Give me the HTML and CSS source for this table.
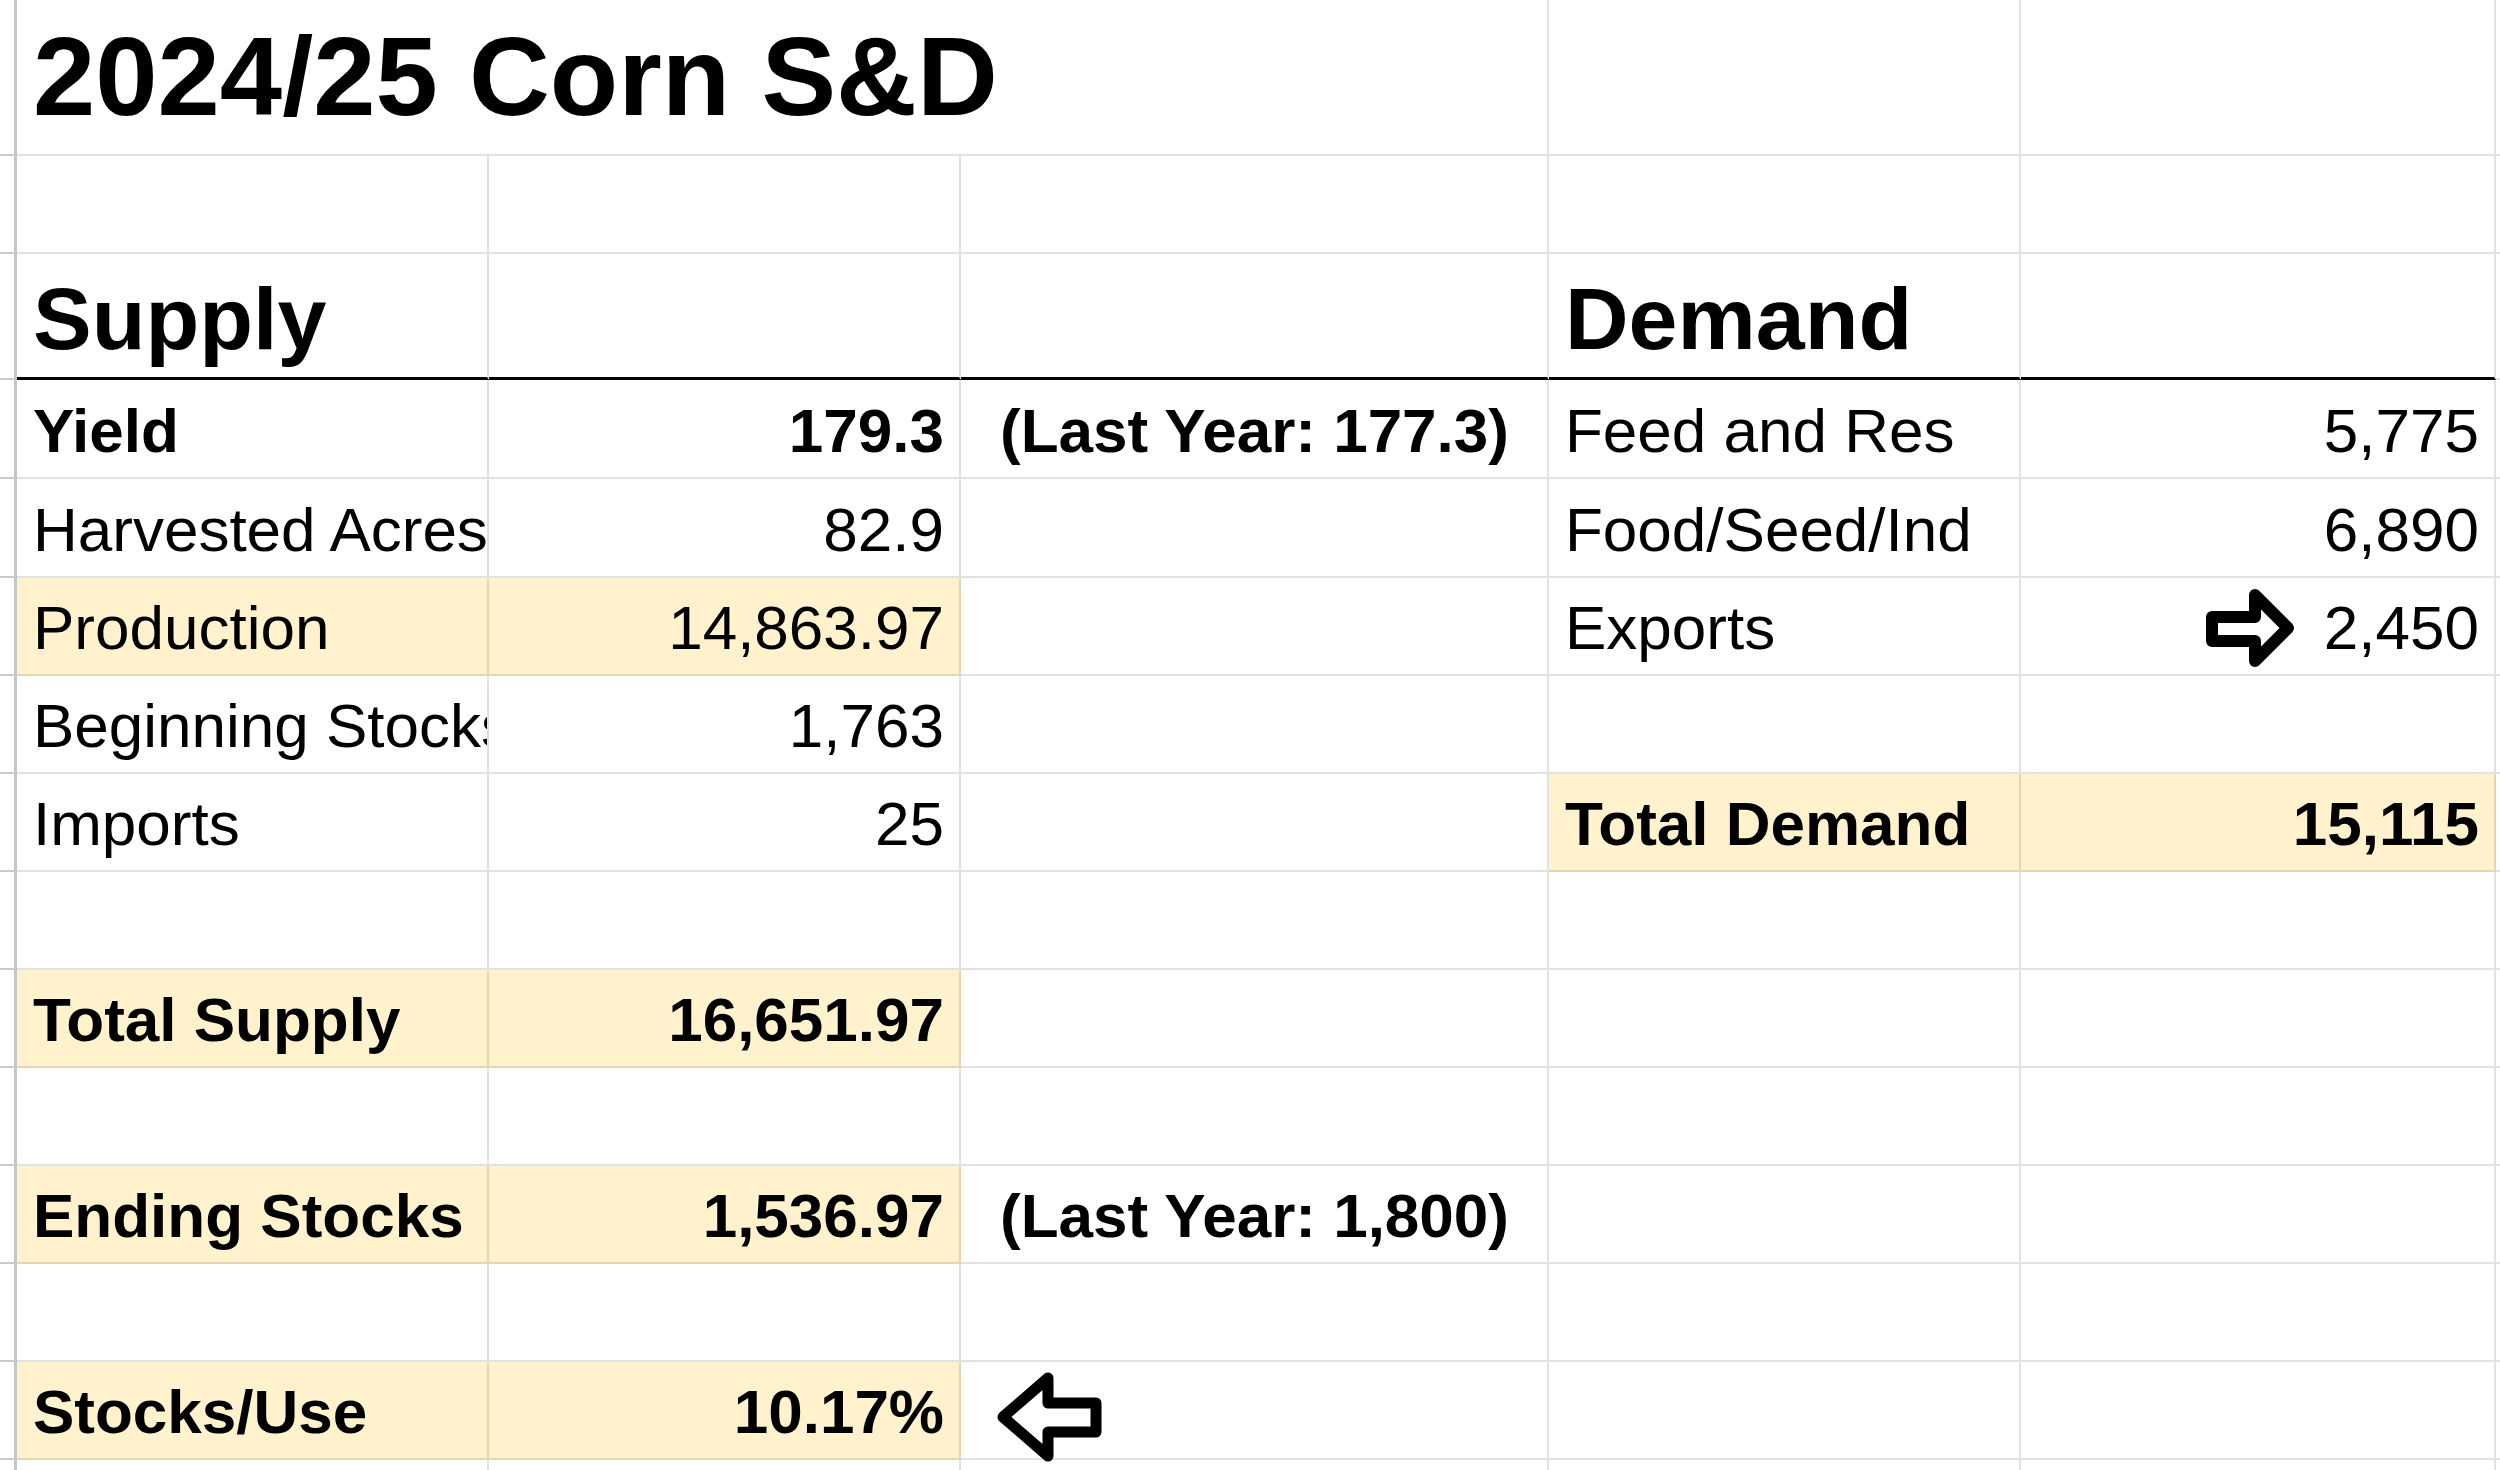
FILE: index.html
```html
<!DOCTYPE html>
<html lang="en">
<head>
<meta charset="utf-8">
<title>2024/25 Corn S&amp;D</title>
<link rel="stylesheet" href="styles.css">
</head>
<body>
<div class="sheet">
  <!-- row 1: title -->
  <div class="stub"></div>
  <div class="cell title span3">2024/25 Corn S&amp;D</div>
  <div class="cell"></div>
  <div class="cell"></div>
  <div class="tail"></div>

  <!-- row 2 -->
  <div class="stub"></div>
  <div class="cell"></div>
  <div class="cell"></div>
  <div class="cell"></div>
  <div class="cell"></div>
  <div class="cell"></div>
  <div class="tail"></div>

  <!-- row 3: section headers -->
  <div class="stub"></div>
  <div class="cell head">Supply</div>
  <div class="cell head"></div>
  <div class="cell head"></div>
  <div class="cell head">Demand</div>
  <div class="cell head"></div>
  <div class="tail"></div>

  <!-- row 4 -->
  <div class="stub"></div>
  <div class="cell bold">Yield</div>
  <div class="cell bold num">179.3</div>
  <div class="cell bold center">(Last Year: 177.3)</div>
  <div class="cell">Feed and Res</div>
  <div class="cell num">5,775</div>
  <div class="tail"></div>

  <!-- row 5 -->
  <div class="stub"></div>
  <div class="cell">Harvested Acres</div>
  <div class="cell num">82.9</div>
  <div class="cell"></div>
  <div class="cell">Food/Seed/Ind</div>
  <div class="cell num">6,890</div>
  <div class="tail"></div>

  <!-- row 6 -->
  <div class="stub"></div>
  <div class="cell hl">Production</div>
  <div class="cell hl num">14,863.97</div>
  <div class="cell"></div>
  <div class="cell">Exports</div>
  <div class="cell num anchor">
    <svg class="arrow arrow-right" width="100" height="90" viewBox="0 0 100 90" aria-hidden="true">
      <path d="M12,34 L55,34 L55,12 L88,45 L55,78 L55,58 L12,58 Z"/>
    </svg>
    2,450
  </div>
  <div class="tail"></div>

  <!-- row 7 -->
  <div class="stub"></div>
  <div class="cell">Beginning Stocks</div>
  <div class="cell num">1,763</div>
  <div class="cell"></div>
  <div class="cell"></div>
  <div class="cell"></div>
  <div class="tail"></div>

  <!-- row 8 -->
  <div class="stub"></div>
  <div class="cell">Imports</div>
  <div class="cell num">25</div>
  <div class="cell"></div>
  <div class="cell hl bold">Total Demand</div>
  <div class="cell hl bold num">15,115</div>
  <div class="tail"></div>

  <!-- row 9 -->
  <div class="stub"></div>
  <div class="cell"></div>
  <div class="cell"></div>
  <div class="cell"></div>
  <div class="cell"></div>
  <div class="cell"></div>
  <div class="tail"></div>

  <!-- row 10 -->
  <div class="stub"></div>
  <div class="cell hl bold">Total Supply</div>
  <div class="cell hl bold num">16,651.97</div>
  <div class="cell"></div>
  <div class="cell"></div>
  <div class="cell"></div>
  <div class="tail"></div>

  <!-- row 11 -->
  <div class="stub"></div>
  <div class="cell"></div>
  <div class="cell"></div>
  <div class="cell"></div>
  <div class="cell"></div>
  <div class="cell"></div>
  <div class="tail"></div>

  <!-- row 12 -->
  <div class="stub"></div>
  <div class="cell hl bold">Ending Stocks</div>
  <div class="cell hl bold num">1,536.97</div>
  <div class="cell bold center">(Last Year: 1,800)</div>
  <div class="cell"></div>
  <div class="cell"></div>
  <div class="tail"></div>

  <!-- row 13 -->
  <div class="stub"></div>
  <div class="cell"></div>
  <div class="cell"></div>
  <div class="cell"></div>
  <div class="cell"></div>
  <div class="cell"></div>
  <div class="tail"></div>

  <!-- row 14 -->
  <div class="stub"></div>
  <div class="cell hl bold">Stocks/Use</div>
  <div class="cell hl bold num">10.17%</div>
  <div class="cell anchor">
    <svg class="arrow arrow-left" width="110" height="96" viewBox="0 0 110 96" aria-hidden="true">
      <path d="M8,47 L53,8 L53,33 L101,33 L101,62 L53,62 L53,86 Z"/>
    </svg>
  </div>
  <div class="cell"></div>
  <div class="cell"></div>
  <div class="tail"></div>

  <!-- row 15: partial -->
  <div class="stub last"></div>
  <div class="cell last"></div>
  <div class="cell last"></div>
  <div class="cell last"></div>
  <div class="cell last"></div>
  <div class="cell last"></div>
  <div class="tail last"></div>
</div>
</body>
</html>
```

FILE: styles.css
```css
* {
  box-sizing: border-box;
}

html, body {
  margin: 0;
  padding: 0;
  background: #ffffff;
}

body {
  font-family: "Liberation Sans", Arial, sans-serif;
  color: #000000;
}

.sheet {
  display: grid;
  grid-template-columns: 17px 472px 472px 588px 472px 475px 1fr;
  grid-template-rows: 156px 98px 126px 99px 99px 98px 98px 98px 98px 98px 98px 98px 98px 98px 10px;
  width: 2500px;
  height: 1470px;
  overflow: hidden;
}

.stub {
  border-right: 3px solid #c4c7c5;
  border-bottom: 2px solid #c9cbca;
}

.tail {
  border-bottom: 2px solid #e1e1e1;
}

.cell {
  display: flex;
  align-items: center;
  padding: 4px 15px 0 16px;
  border-right: 2px solid rgba(0, 0, 0, 0.115);
  border-bottom: 2px solid rgba(0, 0, 0, 0.115);
  font-size: 62px;
  line-height: 1.15;
  white-space: nowrap;
  overflow: hidden;
}

.last {
  border-bottom: none;
}

.span3 {
  grid-column: span 3;
}

.title {
  font-size: 112px;
  font-weight: 700;
  overflow: visible;
  padding-top: 0;
}

.head {
  font-size: 88px;
  font-weight: 700;
  border-bottom: 3px solid #000000;
  padding-top: 6px;
}

.bold {
  font-weight: 700;
}

.num {
  justify-content: flex-end;
}

.center {
  justify-content: center;
}

.hl {
  background: #fff2cc;
}

.anchor {
  position: relative;
  overflow: visible;
}

.arrow {
  position: absolute;
  overflow: visible;
}

.arrow path {
  fill: none;
  stroke: #000000;
  stroke-width: 12;
  stroke-linejoin: round;
}

.arrow-right {
  left: 179px;
  top: 5px;
}

.arrow-left {
  left: 34px;
  top: 8px;
  z-index: 2;
}

.arrow-left path {
  stroke-width: 11;
}
```
